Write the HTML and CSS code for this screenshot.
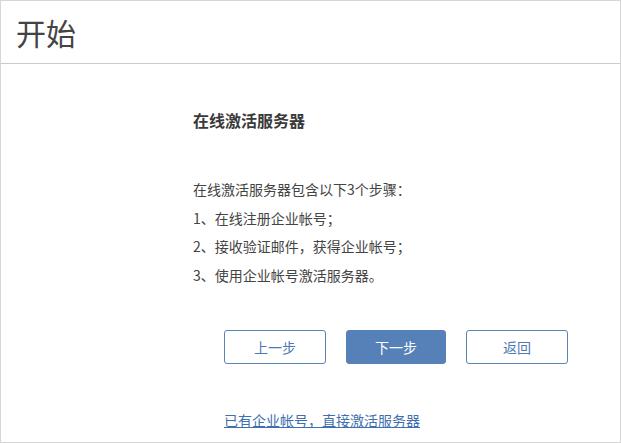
FILE: index.html
```html
<!DOCTYPE html>
<html lang="zh-CN">
<head>
<meta charset="utf-8">
<title>开始</title>
<link rel="stylesheet" href="styles.css">
</head>
<body>
<div class="frame">
  <header class="header">
    <h1 class="title">开始</h1>
  </header>
  <main class="content">
    <h2 class="heading">在线激活服务器</h2>
    <div class="steps">
      <p class="line">在线激活服务器包含以下3个步骤：</p>
      <p class="line">1、在线注册企业帐号；</p>
      <p class="line">2、接收验证邮件，获得企业帐号；</p>
      <p class="line">3、使用企业帐号激活服务器。</p>
    </div>
    <div class="actions">
      <button class="btn btn-outline" type="button">上一步</button>
      <button class="btn btn-primary" type="button">下一步</button>
      <button class="btn btn-outline" type="button">返回</button>
    </div>
    <a class="link" href="#">已有企业帐号，直接激活服务器</a>
  </main>
</div>
</body>
</html>
```

FILE: styles.css
```css
html, body {
  margin: 0;
  padding: 0;
  background: #ffffff;
}

body {
  font-family: "Noto Sans CJK SC", "Noto Sans", "Liberation Sans", sans-serif;
  color: #3c3c3c;
}

.frame {
  width: 621px;
  height: 443px;
  box-sizing: border-box;
  border: 1px solid #d6d6d6;
  display: flex;
  flex-direction: column;
}

.header {
  height: 62px;
  border-bottom: 1px solid #cbcbcb;
  display: flex;
  align-items: center;
  padding-left: 15px;
}

.title {
  margin: 0;
  font-size: 30px;
  font-weight: 400;
  line-height: 36px;
  color: #444444;
}

.content {
  display: flex;
  flex-direction: column;
  align-items: flex-start;
  padding-left: 192px;
}

.heading {
  margin: 44px 0 0 0;
  font-size: 16px;
  line-height: 24px;
  font-weight: 700;
  color: #3a3a3a;
}

.steps {
  margin-top: 43px;
}

.line {
  margin: 0;
  font-size: 14px;
  line-height: 28.5px;
  color: #444444;
}

.actions {
  display: flex;
  gap: 20px;
  margin-top: 41px;
  margin-left: 31px;
}

.btn {
  height: 34px;
  box-sizing: border-box;
  border-radius: 3px;
  font-family: inherit;
  font-size: 14px;
  padding: 0;
  cursor: pointer;
}

.btn-outline {
  width: 102px;
  background: #ffffff;
  border: 1px solid #5a83b8;
  color: #4f79b0;
}

.btn-primary {
  width: 100px;
  background: #5680b8;
  border: 1px solid #5680b8;
  color: #ffffff;
}

.link {
  margin-top: 46px;
  margin-left: 31px;
  font-size: 14px;
  line-height: 20px;
  color: #3f6fae;
  text-decoration: underline;
}
```
